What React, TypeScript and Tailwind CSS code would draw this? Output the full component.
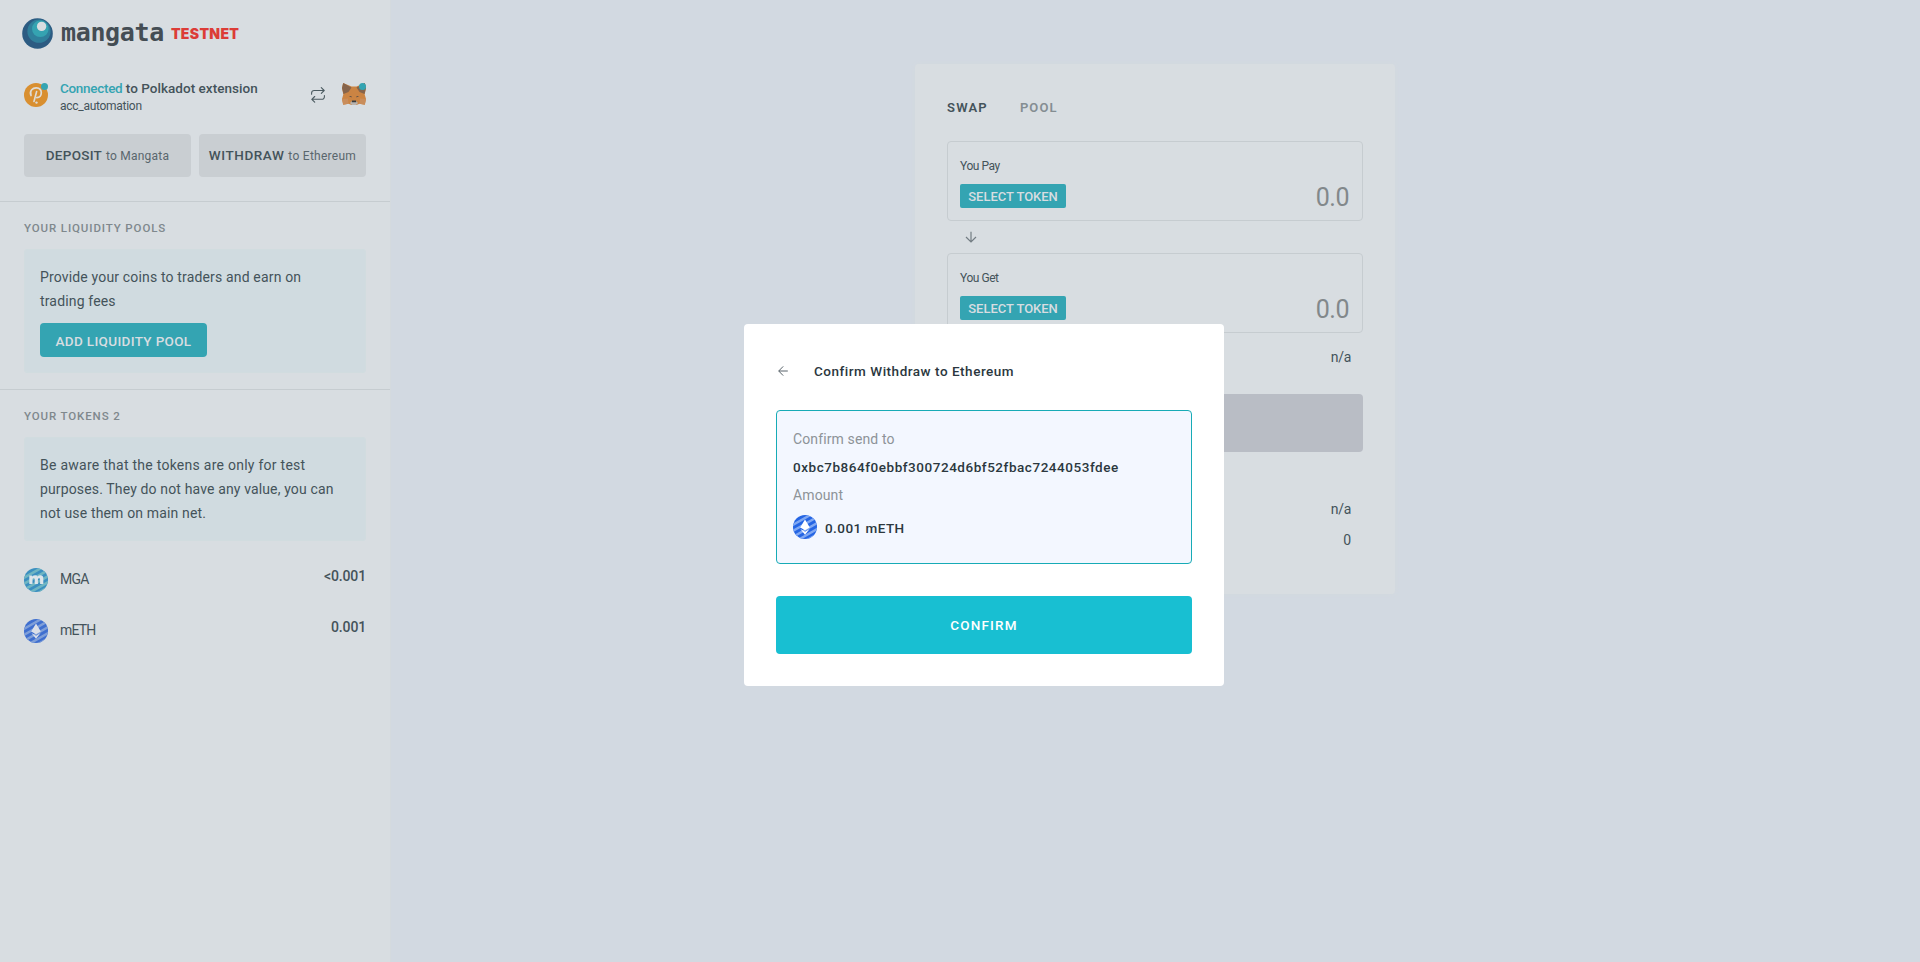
import type { ReactNode } from "react";

function Dot() {
  return <span className="absolute top-0 right-0 size-[7px] rounded-full bg-[#34a4b2]" />;
}

function MangataLogo() {
  return (
    <svg viewBox="0 0 31 31" className="size-[31px] shrink-0">
      <circle cx="15.5" cy="15.5" r="15.3" fill="#2c5b82" />
      <circle cx="17" cy="13.2" r="11.6" fill="#2f7f9b" />
      <circle cx="18.3" cy="10.8" r="8.3" fill="#35a3b1" />
      <circle cx="19.6" cy="8.4" r="4.7" fill="#d8dde1" />
    </svg>
  );
}

function PolkadotIcon() {
  return (
    <svg viewBox="0 0 24 24" className="size-6">
      <circle cx="12" cy="12" r="12" fill="#d98f30" />
      <path d="M7 12.500C5 7.500 9 4.600 12.500 4.800c6.500.4 6.200 9.700.3 9.900M12.600 8.600 10 18.400" fill="none" stroke="#dfdcd6" strokeWidth="1.700" strokeLinecap="round" />
      <circle cx="12.500" cy="19.600" r="1.200" fill="#dfdcd6" />
    </svg>
  );
}

function FoxIcon() {
  return (
    <svg viewBox="0 0 24 22" className="h-[22px] w-6">
      <path d="M1.200 0 9.500 3.600h5L22.800 0 24 5l-1.300 6.500L24 16l-1.200 5.700-5.300-.9L14.500 22h-5l-3-1.200-5.300.9L0 16l1.300-4.500L0 5Z" fill="#cb8443" />
      <path d="M1.200 0 9.500 4.500 6.500 9 1.500 11 0 5Z" fill="#86644b" />
      <path d="m22.800 0-8.300 4.500 3 4.500 5 2L24 5Z" fill="#86644b" />
      <path d="m0 16 6-.6.500 5.400-5.300.9ZM24 16l-6-.6-.500 5.400 5.300.9Z" fill="#c98d5b" />
      <path d="m6.800 12.900 2.500.1.400 1.500ZM17.200 12.900l-2.500.1-.4 1.500Z" fill="#5a4f47" />
      <path d="m8 20 2-2h4l2 2-2 2h-4Z" fill="#b9b3ae" />
      <path d="M10 17.600h4l.2 1.600H9.800Z" fill="#3a3c3e" />
    </svg>
  );
}

function SwapArrowsIcon() {
  return (
    <svg viewBox="0 0 14 16" className="h-4 w-3.5" fill="none" stroke="#4b5a60" strokeWidth="1.1" strokeLinecap="round" strokeLinejoin="round">
      <path d="M.6 7.200V6a2.500 2.500 0 0 1 2.500-2.500H13M10.300.7 13.200 3.500l-2.900 2.800M13.400 8.500v1.300a2.500 2.500 0 0 1-2.500 2.500H.8M3.700 9.500.8 12.300l2.900 2.900" />
    </svg>
  );
}

function MgaIcon() {
  return (
    <svg viewBox="0 0 24 24" className="size-6">
      <clipPath id="mga-clip"><circle cx="12" cy="12" r="12" /></clipPath>
      <g clipPath="url(#mga-clip)">
        <path d="M0 0h24v24H0Z" fill="#3b8fc0" />
        <path d="M-2 5 18-7M-2 11 26-5M-2 17 26 1M-2 23 26 7M-2 29 26 13M4 31l24-14" stroke="#6fb5c2" strokeWidth="2.600" />
      </g>
      <path d="M5.300 7.600h2.900v1q1.200-1.300 3-1.300 1.700 0 2.300 1.300 1.200-1.300 3-1.300 2.800 0 2.800 3V16h-3.200v-4.600q0-1.200-1-1.200-1.200 0-1.200 1.400V16h-3.200v-4.600q0-1.200-1-1.200-1.200 0-1.200 1.400V16H5.300Z" fill="#dde5ea" />
    </svg>
  );
}

function EthIcon({ id, base, stripe, mark }: { id: string; base: string; stripe: string; mark: string }) {
  return (
    <svg viewBox="0 0 24 24" className="size-6 shrink-0">
      <clipPath id={id}><circle cx="12" cy="12" r="12" /></clipPath>
      <g clipPath={`url(#${id})`}>
        <path d="M0 0h24v24H0Z" fill={base} />
        <path d="M-2 5 18-7M-2 11 26-5M-2 17 26 1M-2 23 26 7M-2 29 26 13M4 31l24-14" stroke={stripe} strokeWidth="2.400" />
      </g>
      <path d="M12 4.500 16.800 12.400 12 15.200 7.200 12.400ZM7.400 14 12 16.700 16.600 14 12 19.800Z" fill={mark} />
    </svg>
  );
}

function SectionTitle({ children }: { children: ReactNode }) {
  return <h2 className="text-[11.500px] leading-4 font-medium tracking-[0.880px] text-[#7f888d]">{children}</h2>;
}

function TokenRow({ icon, name, amount }: { icon: ReactNode; name: string; amount: string }) {
  return (
    <li className="flex h-6 items-center">
      {icon}
      <span className="-mt-0.5 ml-3 text-sm leading-6 tracking-[-0.8px]">{name}</span>
      <span className="-mt-2 ml-auto text-sm leading-6 font-medium tracking-[-0.150px]">{amount}</span>
    </li>
  );
}

function Sidebar() {
  return (
    <aside className="w-[391px] shrink-0 border-r border-[#d4dade] bg-[#d8dde1]">
      <div className="flex h-[67px] items-start pt-[18px] pl-[22px]">
        <MangataLogo />
        <span className="ml-2 font-['DejaVu_Sans_Mono'] text-[25px] leading-[29px] font-bold tracking-[-0.350px] text-[#444d54]">mangata</span>
        <span className="ml-[7px] pt-1.5 font-['Inter'] text-sm leading-5 font-black tracking-[0.320px] text-[#dc3c37]">TESTNET</span>
      </div>
      <div className="flex h-[67px] px-6 pt-2.5">
        <div className="relative mt-1.5 size-6">
          <PolkadotIcon />
          <Dot />
        </div>
        <div className="ml-3">
          <p className="pt-px text-[13.500px] leading-5 font-medium whitespace-pre">
            <span className="tracking-[-0.300px] text-[#34a4b2]">Connected</span>
            <span className="tracking-[0.030px]"> to Polkadot extension</span>
          </p>
          <p className="text-xs leading-[17px] tracking-[-0.280px]">acc_automation</p>
        </div>
        <div className="mt-2.5 ml-auto"><SwapArrowsIcon /></div>
        <div className="relative mt-1.5 ml-[17px] h-6">
          <FoxIcon />
          <Dot />
        </div>
      </div>
      <div className="flex gap-2 px-6">
        <button className="flex h-[43px] w-[167px] items-center justify-center rounded-[4px] bg-[#c9ced2]">
          <span className="text-[13.500px] font-medium tracking-[0.260px]">DEPOSIT</span>
          <span className="ml-1 text-xs tracking-[0.220px] text-[#59666d]">to Mangata</span>
        </button>
        <button className="flex h-[43px] w-[167px] items-center justify-center rounded-[4px] bg-[#c9ced2]">
          <span className="text-[13.500px] font-medium tracking-[0.550px]">WITHDRAW</span>
          <span className="ml-1 text-xs tracking-[0.270px] text-[#59666d]">to Ethereum</span>
        </button>
      </div>
      <section className="mt-6 border-t border-[#c6ccd0] px-6 pt-[18px] pb-4">
        <SectionTitle>YOUR LIQUIDITY POOLS</SectionTitle>
        <div className="mt-[13px] h-[124px] rounded-[4px] bg-[#d0dbe0] p-4 leading-6 ring-1 ring-[#d1dcdf] ring-inset">
          <p className="text-sm leading-6 tracking-[0.160px]">Provide your coins to traders and earn on<br />trading fees</p>
          <button className="mt-2.5 block h-[34px] w-[167px] rounded-[4px] bg-[#34a4b2] pt-px text-[13.500px] font-medium tracking-[0.340px] whitespace-nowrap text-[#d8dde1]">ADD LIQUIDITY POOL</button>
        </div>
      </section>
      <section className="border-t border-[#c6ccd0] px-6 pt-[18px]">
        <SectionTitle>YOUR TOKENS 2</SectionTitle>
        <div className="mt-[13px] h-[104px] rounded-[4px] bg-[#d0dbe0] p-4 text-sm leading-6 whitespace-nowrap ring-1 ring-[#d1dcdf] ring-inset">
          <p className="tracking-[0.260px]">Be aware that the tokens are only for test</p>
          <p className="tracking-[0.140px]">purposes. They do not have any value, you can</p>
          <p className="tracking-[0.160px]">not use them on main net.</p>
        </div>
        <ul className="mt-[27px] flex flex-col gap-[27px]">
          <TokenRow icon={<MgaIcon />} name="MGA" amount="<0.001" />
          <TokenRow icon={<EthIcon id="eth-side" base="#3f6fcf" stripe="#7f9fd8" mark="#dbe0e8" />} name="mETH" amount="0.001" />
        </ul>
      </section>
    </aside>
  );
}

function TokenField({ label }: { label: string }) {
  return (
    <div className="h-20 rounded-[4px] border border-[#c6ccd0] px-3 pt-4">
      <p className="text-xs leading-4 tracking-[-0.450px]">{label}</p>
      <div className="mt-2.5 flex h-6 items-center justify-between">
        <button className="h-6 w-[106px] rounded-[2px] bg-[#34a4b2] pt-px text-[13px] font-medium tracking-[-0.040px] whitespace-nowrap text-[#d8dde1]">SELECT TOKEN</button>
        <span className="pt-1 pr-px text-[25px] tracking-[-0.500px] text-[#82888b]">0.0</span>
      </div>
    </div>
  );
}

function SwapCard() {
  return (
    <section className="mt-16 ml-[524px] h-[530px] w-[480px] rounded-[4px] bg-[#d8dde1] px-8 pt-[34px] shadow-[0_0_4px_#d4dade]">
      <div className="flex gap-8 text-[13px] leading-5 font-semibold">
        <span className="tracking-[1.200px]">SWAP</span>
        <span className="tracking-[1.100px] text-[#848d92]">POOL</span>
      </div>
      <div className="mt-[23px]">
        <TokenField label="You Pay" />
        <div className="flex h-8 items-center pl-[18px]">
          <svg viewBox="0 0 12 12" className="size-3" fill="none" stroke="#737d83" strokeWidth="1.200"><path d="M6 .8v10M1 6l5 5 5-5" /></svg>
        </div>
        <TokenField label="You Get" />
      </div>
      <p className="mt-3 pr-3 text-right text-sm leading-6 tracking-[-0.300px]">n/a</p>
      <div className="mt-[25px] h-[58px] rounded-[4px] bg-[#b9bdc5]" />
      <p className="mt-[45px] pr-3 text-right text-sm leading-6 tracking-[-0.300px]">n/a</p>
      <p className="mt-[7px] pr-3 text-right text-sm leading-6">0</p>
    </section>
  );
}

function ConfirmModal() {
  return (
    <div className="fixed inset-0 flex">
      <div className="mt-[324px] ml-[744px] h-[362px] w-[480px] rounded-[4px] bg-white px-8 pt-[35px] text-sm text-[#2b373e]">
        <div className="flex h-6 items-center">
          <svg viewBox="0 0 10 10" className="ml-0.5 size-2.5" fill="none" stroke="#59636a"><path d="M9.800 5H.8M5.200.4.700 5l4.500 4.600" /></svg>
          <h1 className="ml-[26px] pt-px text-[13.500px] font-medium tracking-[0.520px]">Confirm Withdraw to Ethereum</h1>
        </div>
        <div className="mt-[27px] h-[154px] rounded-[4px] border border-[#17abb6] bg-[#f3f7ff] px-4 pt-[14px] leading-7">
          <p className="tracking-[0.120px] text-[#8d9398]">Confirm send to</p>
          <p className="text-[13.500px] leading-7 font-medium tracking-[0.540px]">0xbc7b864f0ebbf300724d6bf52fbac7244053fdee</p>
          <p className="tracking-[0.120px] text-[#8d9398]">Amount</p>
          <div className="mt-1.5 flex h-6 items-center gap-2">
            <EthIcon id="eth-modal" base="#2465e4" stripe="#80a8f2" mark="#ffffff" />
            <span className="pt-px text-[13.500px] font-medium tracking-[0.450px]">0.001 mETH</span>
          </div>
        </div>
        <button className="mt-8 block h-[58px] w-full rounded-[4px] bg-[#18bfd2] pt-px text-center text-[13.500px] font-medium tracking-[1.200px] text-white">CONFIRM</button>
      </div>
    </div>
  );
}

export default function App() {
  return (
    <div className="flex h-screen w-full overflow-hidden bg-[#d2d9e1] font-['Roboto',sans-serif] text-[#44535a]">
      <Sidebar />
      <main className="flex-1"><SwapCard /></main>
      <ConfirmModal />
    </div>
  );
}
